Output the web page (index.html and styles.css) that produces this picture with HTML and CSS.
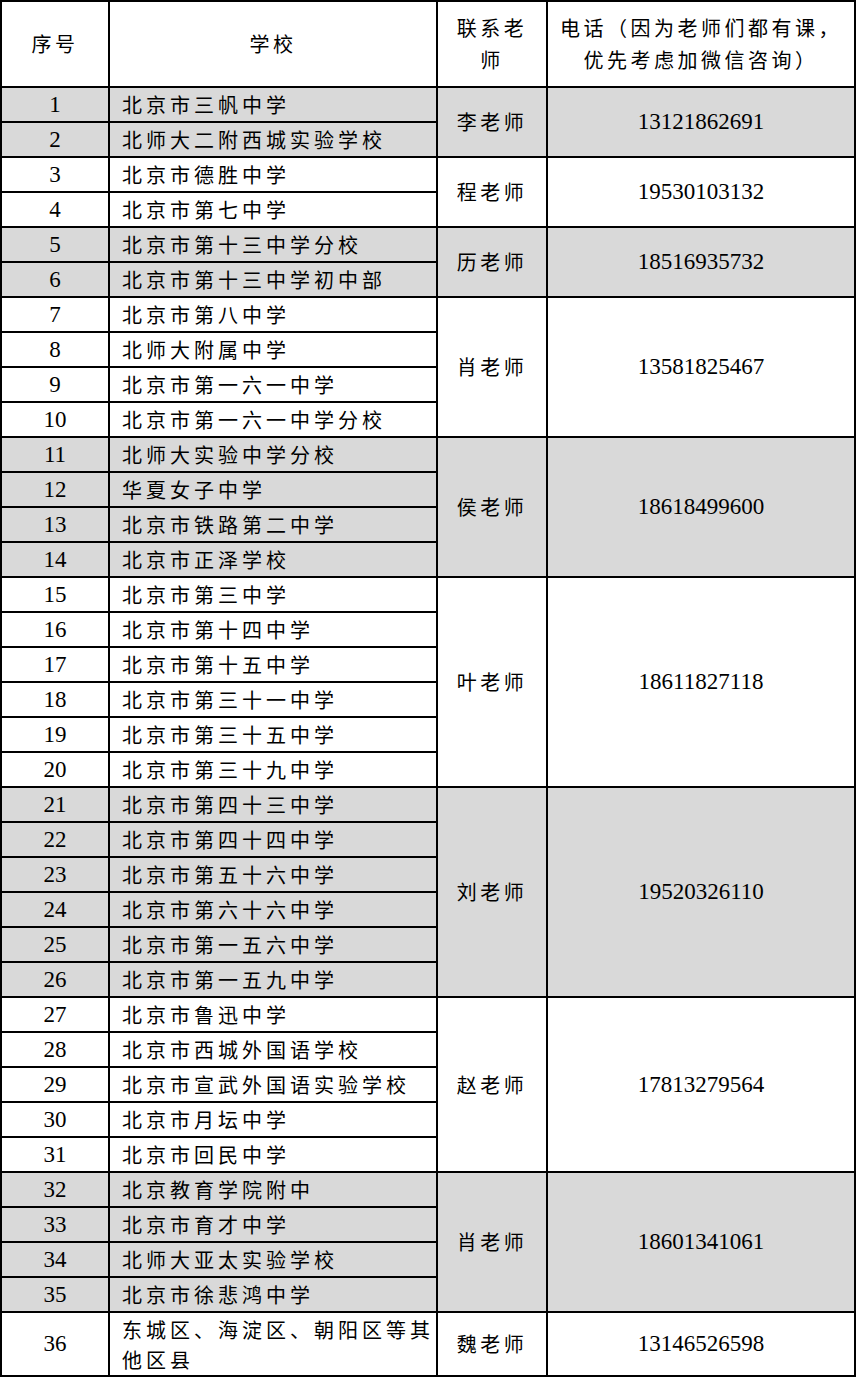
FILE: index.html
```html
<!DOCTYPE html>
<html lang="zh-CN">
<head>
<meta charset="utf-8">
<title>联系老师</title>
<link rel="stylesheet" href="styles.css">
</head>
<body>
<table class="sheet">
  <colgroup>
    <col class="c-no"><col class="c-school"><col class="c-teacher"><col class="c-phone">
  </colgroup>
  <thead>
    <tr class="head">
      <th class="cjk">序号</th>
      <th class="cjk">学校</th>
      <th class="cjk">联系老<br>师</th>
      <th class="cjk">电话（因为老师们都有课，<br>优先考虑加微信咨询）</th>
    </tr>
  </thead>
  <tbody>
    <tr class="g"><td class="no">1</td><td class="school">北京市三帆中学</td><td class="teacher" rowspan="2">李老师</td><td class="phone" rowspan="2">13121862691</td></tr>
    <tr class="g"><td class="no">2</td><td class="school">北师大二附西城实验学校</td></tr>

    <tr><td class="no">3</td><td class="school">北京市德胜中学</td><td class="teacher" rowspan="2">程老师</td><td class="phone" rowspan="2">19530103132</td></tr>
    <tr><td class="no">4</td><td class="school">北京市第七中学</td></tr>

    <tr class="g"><td class="no">5</td><td class="school">北京市第十三中学分校</td><td class="teacher" rowspan="2">历老师</td><td class="phone" rowspan="2">18516935732</td></tr>
    <tr class="g"><td class="no">6</td><td class="school">北京市第十三中学初中部</td></tr>

    <tr><td class="no">7</td><td class="school">北京市第八中学</td><td class="teacher" rowspan="4">肖老师</td><td class="phone" rowspan="4">13581825467</td></tr>
    <tr><td class="no">8</td><td class="school">北师大附属中学</td></tr>
    <tr><td class="no">9</td><td class="school">北京市第一六一中学</td></tr>
    <tr><td class="no">10</td><td class="school">北京市第一六一中学分校</td></tr>

    <tr class="g"><td class="no">11</td><td class="school">北师大实验中学分校</td><td class="teacher" rowspan="4">侯老师</td><td class="phone" rowspan="4">18618499600</td></tr>
    <tr class="g"><td class="no">12</td><td class="school">华夏女子中学</td></tr>
    <tr class="g"><td class="no">13</td><td class="school">北京市铁路第二中学</td></tr>
    <tr class="g"><td class="no">14</td><td class="school">北京市正泽学校</td></tr>

    <tr><td class="no">15</td><td class="school">北京市第三中学</td><td class="teacher" rowspan="6">叶老师</td><td class="phone" rowspan="6">18611827118</td></tr>
    <tr><td class="no">16</td><td class="school">北京市第十四中学</td></tr>
    <tr><td class="no">17</td><td class="school">北京市第十五中学</td></tr>
    <tr><td class="no">18</td><td class="school">北京市第三十一中学</td></tr>
    <tr><td class="no">19</td><td class="school">北京市第三十五中学</td></tr>
    <tr><td class="no">20</td><td class="school">北京市第三十九中学</td></tr>

    <tr class="g"><td class="no">21</td><td class="school">北京市第四十三中学</td><td class="teacher" rowspan="6">刘老师</td><td class="phone" rowspan="6">19520326110</td></tr>
    <tr class="g"><td class="no">22</td><td class="school">北京市第四十四中学</td></tr>
    <tr class="g"><td class="no">23</td><td class="school">北京市第五十六中学</td></tr>
    <tr class="g"><td class="no">24</td><td class="school">北京市第六十六中学</td></tr>
    <tr class="g"><td class="no">25</td><td class="school">北京市第一五六中学</td></tr>
    <tr class="g"><td class="no">26</td><td class="school">北京市第一五九中学</td></tr>

    <tr><td class="no">27</td><td class="school">北京市鲁迅中学</td><td class="teacher" rowspan="5">赵老师</td><td class="phone" rowspan="5">17813279564</td></tr>
    <tr><td class="no">28</td><td class="school">北京市西城外国语学校</td></tr>
    <tr><td class="no">29</td><td class="school">北京市宣武外国语实验学校</td></tr>
    <tr><td class="no">30</td><td class="school">北京市月坛中学</td></tr>
    <tr><td class="no">31</td><td class="school">北京市回民中学</td></tr>

    <tr class="g"><td class="no">32</td><td class="school">北京教育学院附中</td><td class="teacher" rowspan="4">肖老师</td><td class="phone" rowspan="4">18601341061</td></tr>
    <tr class="g"><td class="no">33</td><td class="school">北京市育才中学</td></tr>
    <tr class="g"><td class="no">34</td><td class="school">北师大亚太实验学校</td></tr>
    <tr class="g"><td class="no">35</td><td class="school">北京市徐悲鸿中学</td></tr>

    <tr class="last"><td class="no">36</td><td class="school two">东城区、海淀区、朝阳区等其<br>他区县</td><td class="teacher">魏老师</td><td class="phone">13146526598</td></tr>
  </tbody>
</table>
</body>
</html>
```

FILE: styles.css
```css
html, body {
  margin: 0;
  padding: 0;
  background: #ffffff;
}

body {
  font-family: "Liberation Serif", "Noto Sans CJK SC", serif;
  color: #000000;
}

.sheet {
  border-collapse: collapse;
  table-layout: fixed;
  width: 856px;
  margin: 0;
}

.c-no { width: 108px; }
.c-school { width: 328px; }
.c-teacher { width: 110px; }
.c-phone { width: 308px; }

.sheet th,
.sheet td {
  border: 2px solid #000000;
  padding: 0;
  text-align: center;
  vertical-align: middle;
  font-weight: normal;
}

.sheet .cjk,
.sheet .school,
.sheet .teacher {
  font-family: "Noto Sans CJK SC", sans-serif;
  font-size: 20px;
  letter-spacing: 3.5px;
}

.head {
  height: 86px;
}

.head th {
  line-height: 32px;
}

.sheet tbody tr {
  height: 35px;
}

.sheet tbody tr.last {
  height: 64px;
}

.sheet .g td {
  background: #d9d9d9;
}

.sheet .no,
.sheet .phone {
  font-family: "Liberation Serif", serif;
  font-size: 23px;
  line-height: 30px;
}

.sheet td.school {
  text-align: left;
  padding-left: 12px;
  line-height: 30px;
  letter-spacing: 4px;
  white-space: nowrap;
}

.sheet td.school.two {
  line-height: 30px;
  padding-top: 2px;
}

.sheet td.teacher {
  line-height: 30px;
}
```
